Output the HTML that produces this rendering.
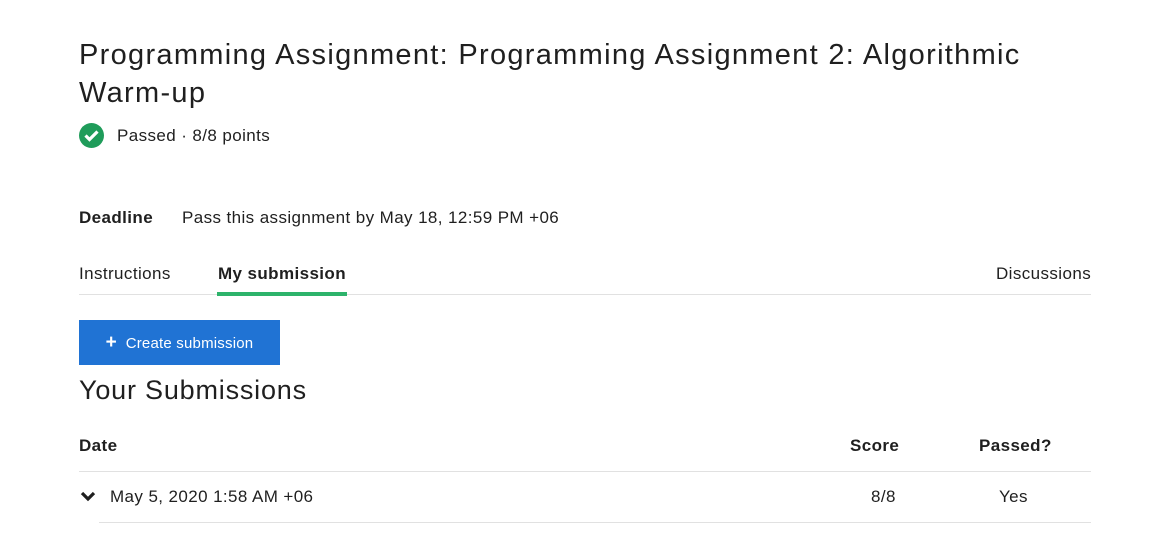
<!DOCTYPE html>
<html><head><meta charset="utf-8"><style>
body{margin:0;width:1175px;height:535px;background:#fff;font-family:"Liberation Sans",sans-serif;color:#1f1f1f;position:relative;overflow:hidden}
.a{position:absolute;white-space:nowrap}
h1{position:absolute;left:79px;top:36px;margin:0;font-weight:normal;font-size:29px;line-height:38px;letter-spacing:1.3px;width:1000px}
.s{font-size:17px;letter-spacing:0.4px}
.b{font-weight:bold}
.line{position:absolute;height:1px;background:#e1e1e1}
</style></head><body>
<h1>Programming Assignment: Programming Assignment 2: Algorithmic Warm-up</h1>
<svg class="a" style="left:79px;top:123px" width="25" height="25" viewBox="0 0 25 25"><circle cx="12.5" cy="12.5" r="12.5" fill="#1f9c5a"/><path d="M6.5 12.5l4 4 8-8" stroke="#fff" stroke-width="3.2" fill="none"/></svg>
<div class="a s" style="left:117px;top:126px">Passed · 8/8 points</div>
<div class="a s b" style="left:79px;top:208px">Deadline</div>
<div class="a s" style="left:182px;top:208px">Pass this assignment by May 18, 12:59 PM +06</div>
<div class="a s" style="left:79px;top:264px">Instructions</div>
<div class="a s b" style="left:218px;top:264px">My submission</div>
<div class="a s" style="left:996px;top:264px">Discussions</div>
<div class="line" style="left:79px;top:294px;width:1012px"></div>
<div class="a" style="left:217px;top:292px;width:130px;height:4px;background:#2db36b"></div>
<div class="a" style="left:79px;top:320px;width:201px;height:45px;background:#2073d4;color:#fff;font-size:15px;line-height:45px;text-align:center;letter-spacing:0.2px"><b style="font-size:19px">+</b>&nbsp; Create submission</div>
<div class="a" style="left:79px;top:375px;font-size:27px;letter-spacing:0.8px">Your Submissions</div>
<div class="a s b" style="left:79px;top:436px">Date</div>
<div class="a s b" style="left:850px;top:436px">Score</div>
<div class="a s b" style="left:979px;top:436px">Passed?</div>
<div class="line" style="left:79px;top:471px;width:1012px"></div>
<svg class="a" style="left:80px;top:491px" width="16" height="11" viewBox="0 0 16 11"><path d="M2 2l6 6 6-6" stroke="#1f1f1f" stroke-width="3.2" fill="none"/></svg>
<div class="a s" style="left:110px;top:487px">May 5, 2020 1:58 AM +06</div>
<div class="a s" style="left:871px;top:487px">8/8</div>
<div class="a s" style="left:999px;top:487px">Yes</div>
<div class="line" style="left:99px;top:522px;width:992px"></div>
</body></html>
